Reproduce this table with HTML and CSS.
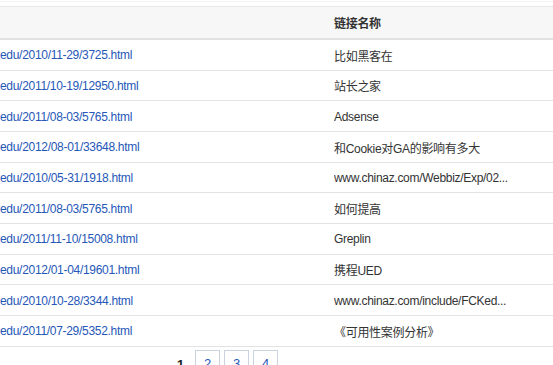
FILE: index.html
```html
<!DOCTYPE html>
<html>
<head>
<meta charset="utf-8">
<link rel="stylesheet" href="styles.css">
</head>
<body>
<div class="page">
  <div class="topline"></div>
  <table class="links">
    <thead>
      <tr><th class="c1"></th><th class="c2">链接名称</th></tr>
    </thead>
    <tbody>
      <tr><td class="c1"><a href="#">edu/2010/11-29/3725.html</a></td><td class="c2">比如黑客在</td></tr>
      <tr><td class="c1"><a href="#">edu/2011/10-19/12950.html</a></td><td class="c2">站长之家</td></tr>
      <tr><td class="c1"><a href="#">edu/2011/08-03/5765.html</a></td><td class="c2">Adsense</td></tr>
      <tr><td class="c1"><a href="#">edu/2012/08-01/33648.html</a></td><td class="c2">和Cookie对GA的影响有多大</td></tr>
      <tr><td class="c1"><a href="#">edu/2010/05-31/1918.html</a></td><td class="c2">www.chinaz.com/Webbiz/Exp/02...</td></tr>
      <tr><td class="c1"><a href="#">edu/2011/08-03/5765.html</a></td><td class="c2">如何提高</td></tr>
      <tr><td class="c1"><a href="#">edu/2011/11-10/15008.html</a></td><td class="c2">Greplin</td></tr>
      <tr><td class="c1"><a href="#">edu/2012/01-04/19601.html</a></td><td class="c2">携程UED</td></tr>
      <tr><td class="c1"><a href="#">edu/2010/10-28/3344.html</a></td><td class="c2">www.chinaz.com/include/FCKed...</td></tr>
      <tr><td class="c1"><a href="#">edu/2011/07-29/5352.html</a></td><td class="c2">《可用性案例分析》</td></tr>
    </tbody>
  </table>
  <div class="pager">
    <span class="cur">1</span>
    <a class="pg" href="#">2</a>
    <a class="pg" href="#">3</a>
    <a class="pg" href="#">4</a>
  </div>
</div>
</body>
</html>
```
FILE: styles.css
```css
html, body {
  margin: 0;
  padding: 0;
  background: #ffffff;
}
body {
  font-family: "Liberation Sans", Arial, "Noto Sans CJK SC", sans-serif;
  font-size: 12px;
  color: #333333;
  letter-spacing: -0.3px;
  overflow: hidden;
}
.page {
  width: 553px;
}
.topline {
  height: 1px;
  margin-top: 1px;
  background: #f1f1f1;
  margin-bottom: 4px;
}
.links {
  width: 553px;
  border-collapse: collapse;
  border-top: 1px solid #e6e6e6;
  table-layout: fixed;
}
.links th, .links td {
  padding: 0;
  text-align: left;
  vertical-align: middle;
  white-space: nowrap;
  overflow: hidden;
}
.links .c1 { width: 334px; }
.links th {
  background: #f7f7f7;
  height: 31px;
  font-weight: bold;
  color: #333333;
  border-bottom: 2px solid #e2e2e2;
}
.links td {
  height: 28.67px;
  padding-top: 1px;
  border-bottom: 1px solid #e3e3e3;
}
.links a {
  color: #2657b8;
  text-decoration: none;
}
.pager {
  display: flex;
  align-items: flex-start;
  padding-left: 177px;
  padding-top: 3px;
  gap: 4px;
}
.cur {
  font-weight: bold;
  color: #222222;
  width: 14px;
  padding-top: 7px;
  font-size: 13px;
}
.pg {
  display: block;
  box-sizing: border-box;
  width: 25px;
  height: 24px;
  border: 1px solid #ccd3e0;
  color: #2657b8;
  text-decoration: none;
  text-align: center;
  padding-top: 5px;
  font-size: 13px;
}
```
